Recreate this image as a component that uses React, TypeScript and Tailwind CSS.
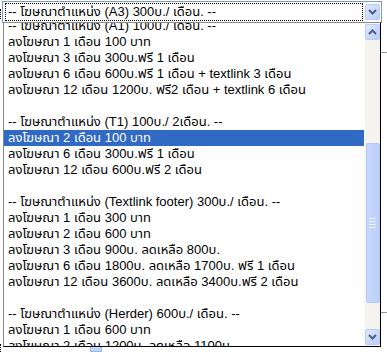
import React from "react";

const FONT = { fontFamily: '"Liberation Sans", "Noto Sans Thai", "Noto Sans", Tahoma, sans-serif' };

const items = [
  "-- โฆษณาตำแหน่ง (A1) 100บ./ เดือน. --",
  "ลงโฆษณา 1 เดือน 100 บาท",
  "ลงโฆษณา 3 เดือน 300บ.ฟรี 1 เดือน",
  "ลงโฆษณา 6 เดือน 600บ.ฟรี 1 เดือน + textlink 3 เดือน",
  "ลงโฆษณา 12 เดือน 1200บ. ฟรี2 เดือน + textlink 6 เดือน",
  "",
  "-- โฆษณาตำแหน่ง (T1) 100บ./ 2เดือน. --",
  "ลงโฆษณา 2 เดือน 100 บาท",
  "ลงโฆษณา 6 เดือน 300บ.ฟรี 1 เดือน",
  "ลงโฆษณา 12 เดือน 600บ.ฟรี 2 เดือน",
  "",
  "-- โฆษณาตำแหน่ง (Textlink footer) 300บ./ เดือน. --",
  "ลงโฆษณา 1 เดือน 300 บาท",
  "ลงโฆษณา 2 เดือน 600 บาท",
  "ลงโฆษณา 3 เดือน 900บ. ลดเหลือ 800บ.",
  "ลงโฆษณา 6 เดือน 1800บ. ลดเหลือ 1700บ. ฟรี 1 เดือน",
  "ลงโฆษณา 12 เดือน 3600บ. ลดเหลือ 3400บ.ฟรี 2 เดือน",
  "",
  "-- โฆษณาตำแหน่ง (Herder) 600บ./ เดือน. --",
  "ลงโฆษณา 1 เดือน 600 บาท",
  "ลงโฆษณา 2 เดือน 1200บ. ลดเหลือ 1100บ.",
];

const SELECTED = 7;

function Chevron({ up }: { up?: boolean }) {
  return (
    <svg width="9" height="6" viewBox="0 0 9 6">
      <path
        d={up ? "M1 5 L4.5 1.5 L8 5" : "M1 1 L4.5 4.5 L8 1"}
        fill="none"
        stroke="#4d6185"
        strokeWidth="2"
      />
    </svg>
  );
}

function ArrowButton({ up }: { up?: boolean }) {
  return (
    <div className="w-[15px] h-[16px] flex items-center justify-center rounded-[2px] border border-[#b9cdf6] bg-gradient-to-br from-[#e0e9fe] to-[#b9cdf9]">
      <Chevron up={up} />
    </div>
  );
}

function App() {
  return (
    <div className="relative w-[387px] h-[352px] bg-white overflow-hidden text-[13px] text-black" style={FONT}>
      {/* page behind the popup */}
      <div className="absolute left-0 top-[9px] w-[2px] h-[10px] border-l border-dotted border-black" />
      <div className="absolute left-[381px] top-[52px] w-[6px] h-px bg-[#9a9a9a]" />
      <div className="absolute left-[381px] top-[312px] w-[6px] h-px bg-[#9a9a9a]" />
      <div className="absolute left-0 top-[344px] flex items-start h-[8px]">
        <div className="w-[2px] h-[8px] border-l border-dotted border-black" />
        <div className="ml-[88px] w-[12px] h-[6px] bg-[#c5d5f5] border border-[#9bb5e5] mt-[2px]" />
      </div>

      {/* the select */}
      <div className="ml-[2px] mt-[1px] w-[380px] h-[22px] border border-[#7f9db9] bg-white flex items-center pl-[2px] pr-[1px] gap-[2px]">
        <div className="flex-1 h-[18px] border border-dotted border-black flex items-center pl-[2px] pb-[1px] leading-none whitespace-nowrap overflow-hidden">
          -- โฆษณาตำแหน่ง (A3) 300บ./ เดือน. --
        </div>
        <ArrowButton />
      </div>

      {/* dropdown list */}
      <div className="absolute left-[3px] top-[22px] w-[378px] h-[325px] bg-white border border-black border-l-[#8a8a8a] border-t-[#8a8a8a] flex overflow-hidden">
        <div className="flex-1 overflow-hidden">
          <div className="mt-[-5px] flex flex-col">
            {items.map((t, i) => (
              <div
                key={i}
                className={
                  "h-[16px] pl-[4px] pb-[2px] flex items-center whitespace-nowrap leading-none " +
                  (i === SELECTED ? "bg-[#316ac5] text-white" : "")
                }
              >
                {t}
              </div>
            ))}
          </div>
        </div>
        <div className="w-[16px] h-full bg-[#f4f3ee] flex flex-col items-center py-[1px] border-l border-[#fcfcfa]">
          <ArrowButton up />
          <div className="flex-1 w-full flex flex-col items-center pt-[103px] pb-[26px]">
            <div className="w-[14px] flex-1 rounded-[2px] border border-[#b4c8f6] bg-gradient-to-r from-[#c8d8fd] to-[#bacff9] flex flex-col items-center justify-center gap-[2px]">
              <div className="w-[7px] h-px bg-[#eef3fe]" />
              <div className="w-[7px] h-px bg-[#eef3fe]" />
              <div className="w-[7px] h-px bg-[#eef3fe]" />
              <div className="w-[7px] h-px bg-[#eef3fe]" />
            </div>
          </div>
          <ArrowButton />
        </div>
      </div>
    </div>
  );
}

export default App;
